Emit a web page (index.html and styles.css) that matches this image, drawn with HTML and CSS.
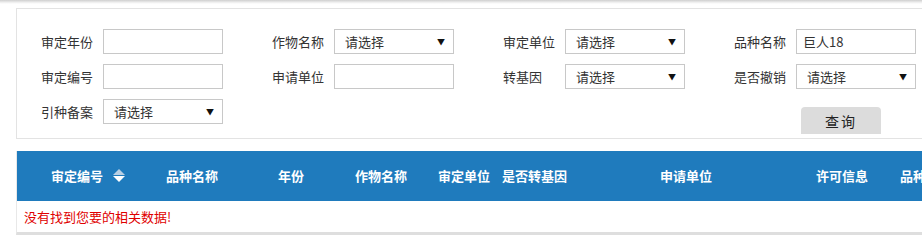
FILE: index.html
```html
<!DOCTYPE html>
<html lang="zh-CN">

<head>
    <meta charset="UTF-8">
    <title>品种审定查询</title>
    <link rel="stylesheet" href="styles.css">
</head>

<body>
    <div class="top-shadow"></div>

    <div class="search-panel">
        <div class="form-grid">
            <div class="field">
                <label>审定年份</label>
                <div class="input"></div>
            </div>
            <div class="field">
                <label>作物名称</label>
                <div class="select"><span>请选择</span><i class="arrow">▼</i></div>
            </div>
            <div class="field">
                <label>审定单位</label>
                <div class="select"><span>请选择</span><i class="arrow">▼</i></div>
            </div>
            <div class="field">
                <label>品种名称</label>
                <div class="input">巨人18</div>
            </div>

            <div class="field">
                <label>审定编号</label>
                <div class="input"></div>
            </div>
            <div class="field">
                <label>申请单位</label>
                <div class="input"></div>
            </div>
            <div class="field">
                <label>转基因</label>
                <div class="select"><span>请选择</span><i class="arrow">▼</i></div>
            </div>
            <div class="field">
                <label>是否撤销</label>
                <div class="select"><span>请选择</span><i class="arrow">▼</i></div>
            </div>

            <div class="field">
                <label>引种备案</label>
                <div class="select"><span>请选择</span><i class="arrow">▼</i></div>
            </div>
            <div class="field"></div>
            <div class="field"></div>
            <div class="field button-cell">
                <button class="btn-query">查询</button>
            </div>
        </div>
    </div>

    <div class="result-box">
        <div class="result-head">
            <div class="th c1">审定编号 <span class="sort"><b class="up"></b><b class="down"></b></span></div>
            <div class="th c2">品种名称</div>
            <div class="th c3">年份</div>
            <div class="th c4">作物名称</div>
            <div class="th c5">审定单位</div>
            <div class="th c6">是否转基因</div>
            <div class="th c7">申请单位</div>
            <div class="th c8">许可信息</div>
            <div class="th c9">品种来源</div>
        </div>
        <div class="empty-row">没有找到您要的相关数据!</div>
    </div>
</body>

</html>
```

FILE: styles.css
```css
body {
    margin: 0;
    width: 922px;
    height: 236px;
    overflow: hidden;
    background-color: #fff;
    font-family: "Microsoft YaHei", "Noto Sans CJK SC", sans-serif;
    font-size: 13px;
    color: #333;
}

.top-shadow {
    height: 4px;
    background: linear-gradient(#cfcfcf, #f4f4f4 70%, #fff);
}

/* Search panel */
.search-panel {
    margin: 4px 0 0 16px;
    width: 1000px;
    height: 129px;
    border: 1px solid #e3e3e3;
}

.form-grid {
    display: grid;
    grid-template-columns: repeat(4, 231px);
    grid-auto-rows: 25px;
    row-gap: 10px;
    padding: 20px 0 0 24px;
}

.field {
    display: flex;
    align-items: center;
}

.field label {
    width: 62px;
    flex: none;
    line-height: 25px;
}

.input,
.select {
    width: 120px;
    height: 25px;
    box-sizing: border-box;
    border: 1px solid #c8c8c8;
    background-color: #fff;
    line-height: 23px;
}

.input {
    padding-left: 6px;
}

.select {
    display: flex;
    justify-content: space-between;
    padding: 0 8px 0 10px;
}

.arrow {
    font-style: normal;
    font-size: 8px;
    color: #111;
}

.button-cell {
    align-items: flex-start;
}

.btn-query {
    margin: 8px 0 0 67px;
    width: 80px;
    height: 27px;
    border: none;
    border-radius: 4px 4px 0 0;
    background-color: #dcdcdc;
    font-family: inherit;
    font-size: 14px;
    color: #222;
    letter-spacing: 2px;
    padding: 0;
}

/* Results */
.result-box {
    margin: 12px 0 0 16px;
    width: 1000px;
    border-left: 1px solid #e8e8e8;
    border-bottom: 3px solid #dedede;
}

.result-head {
    display: flex;
    align-items: center;
    height: 50px;
    padding-bottom: 1px;
    box-sizing: border-box;
    background-color: #1f7bbd;
    color: #fff;
    font-weight: bold;
}

.th {
    flex: none;
    white-space: nowrap;
}

.c1 { width: 115px; padding-left: 34px; display: flex; align-items: center; }
.c2 { width: 112px; }
.c3 { width: 77px; }
.c4 { width: 83px; }
.c5 { width: 64px; }
.c6 { width: 158px; }
.c7 { width: 156px; }
.c8 { width: 84px; }
.c9 { width: 100px; }

.sort {
    display: inline-flex;
    flex-direction: column;
    margin-left: 10px;
}

.sort .up {
    width: 0;
    height: 0;
    border-left: 6px solid transparent;
    border-right: 6px solid transparent;
    border-bottom: 6px solid #b9cfe3;
    margin-bottom: 1px;
}

.sort .down {
    width: 0;
    height: 0;
    border-left: 6px solid transparent;
    border-right: 6px solid transparent;
    border-top: 6px solid #fff;
}

.empty-row {
    height: 31px;
    line-height: 31px;
    padding-left: 7px;
    color: #e00000;
    font-size: 13px;
}
```
